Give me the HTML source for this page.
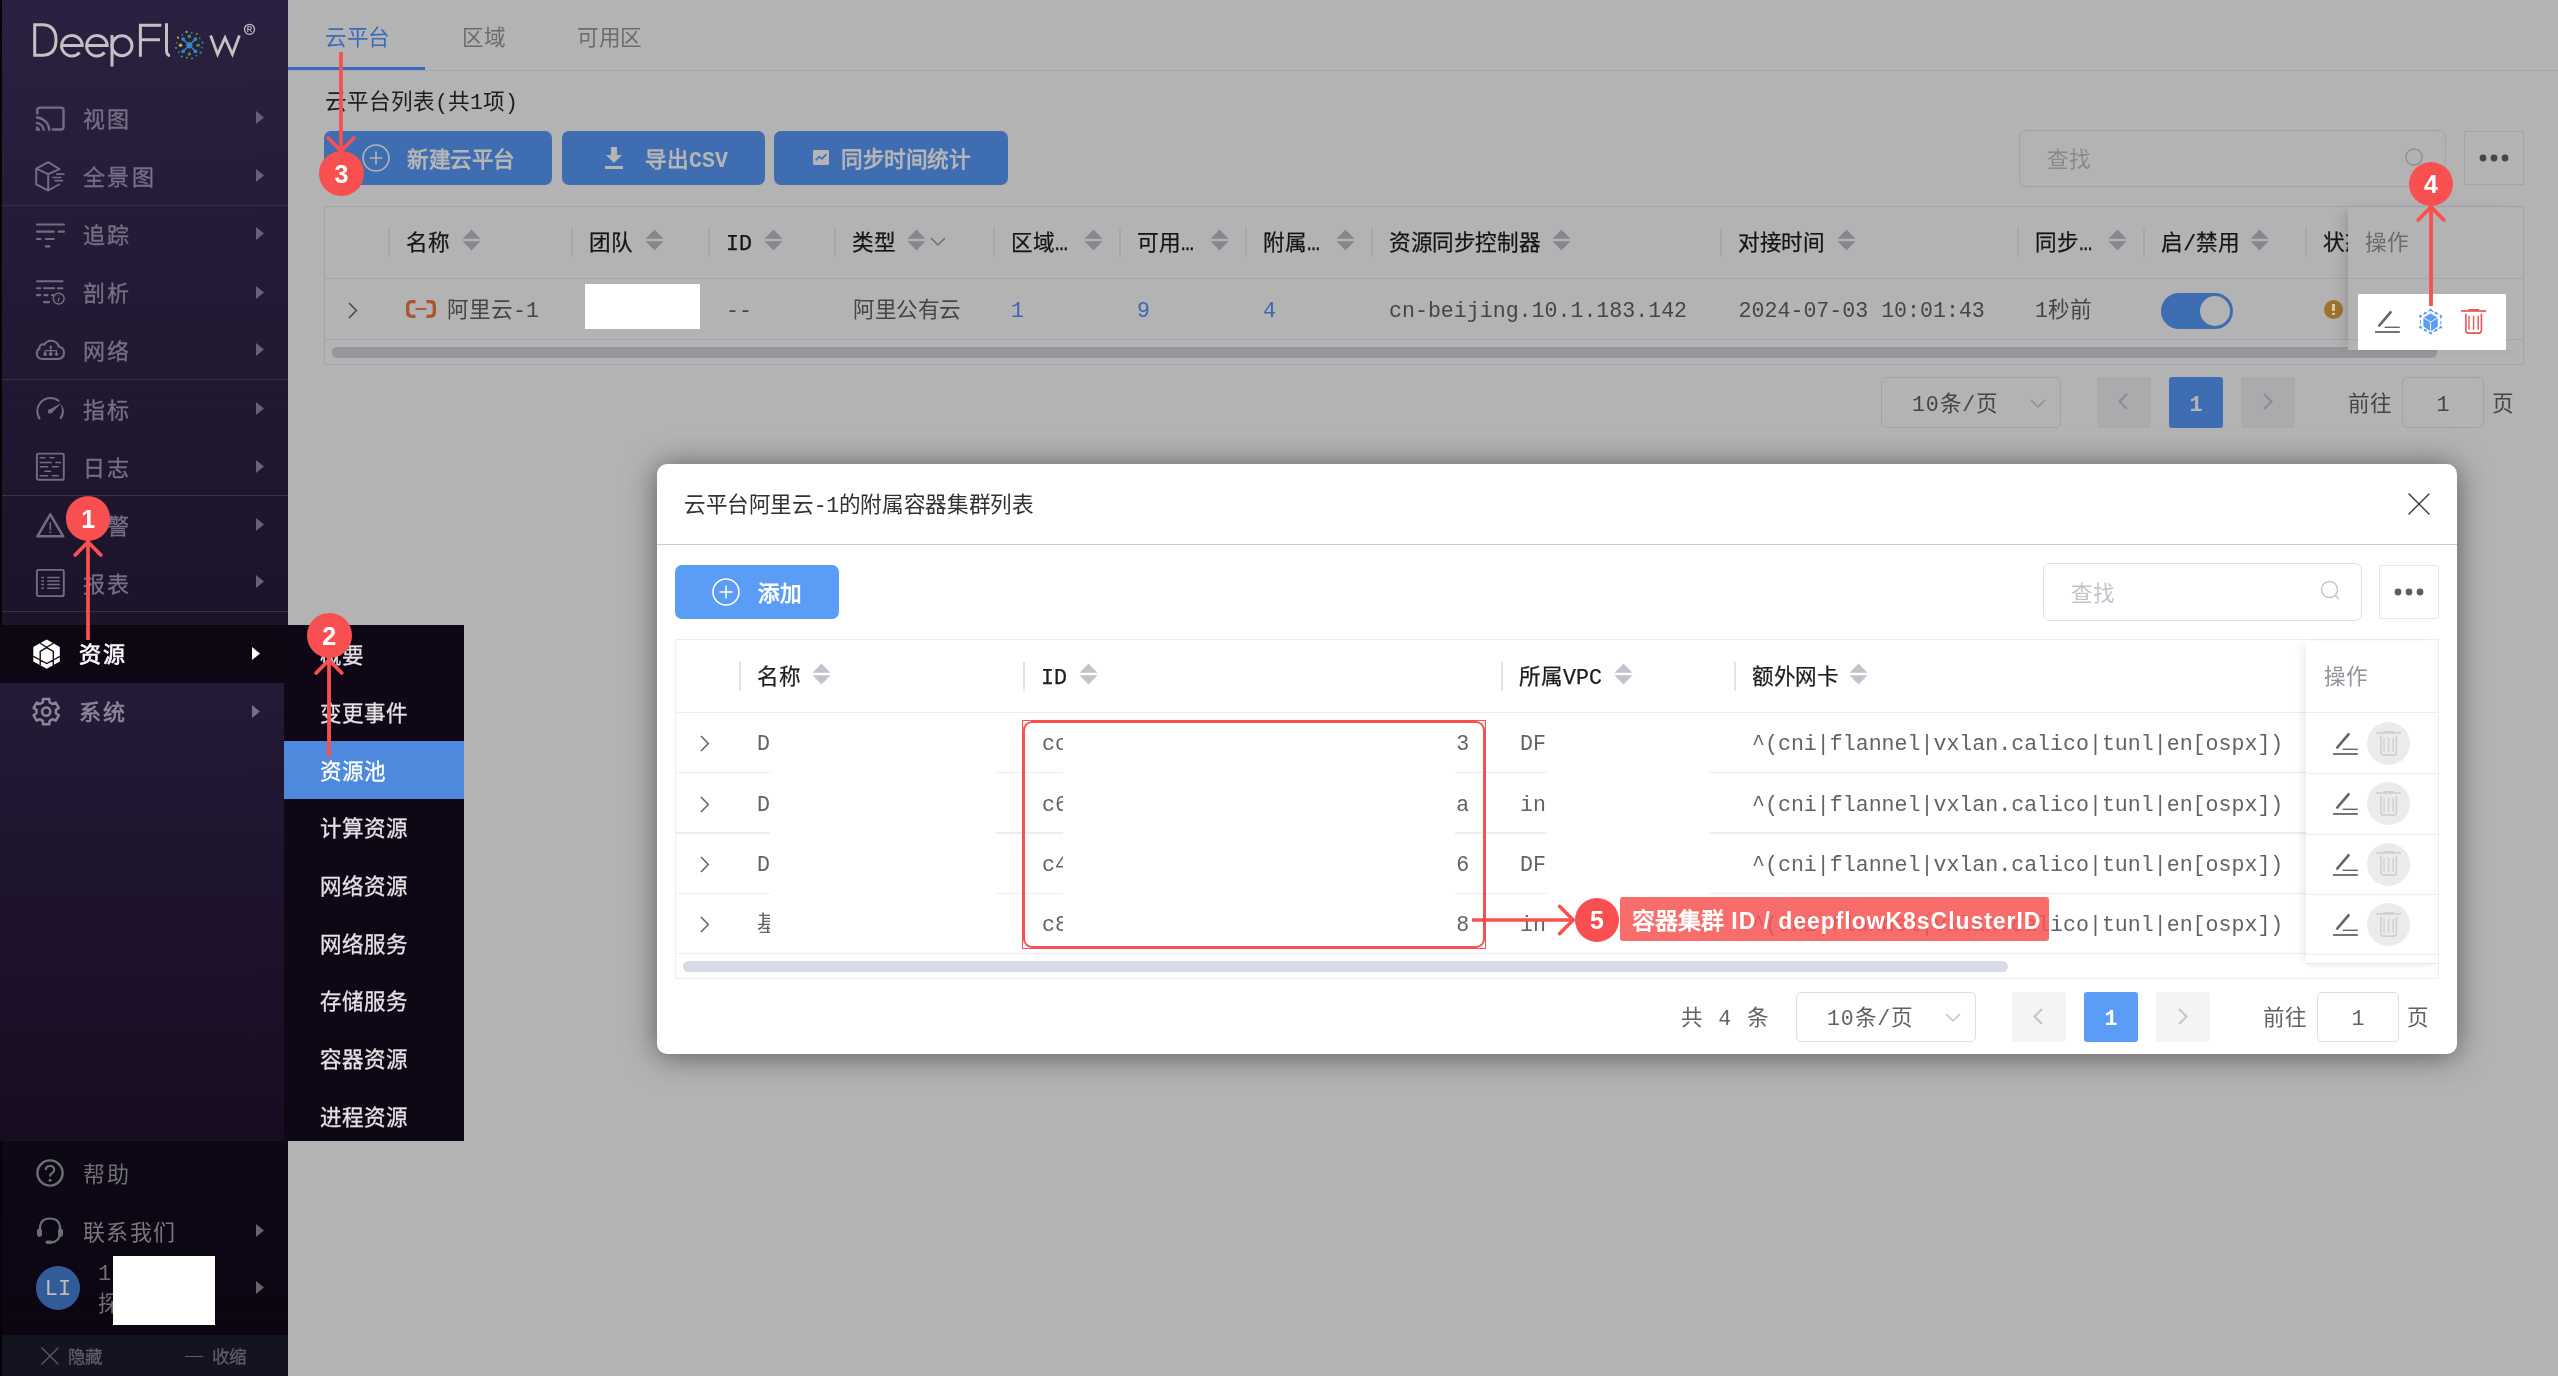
<!DOCTYPE html>
<html lang="zh-CN"><head><meta charset="utf-8"><title>DeepFlow</title>
<style>
html,body{margin:0;padding:0;}
body{width:2558px;height:1376px;overflow:hidden;background:#b3b3b3;position:relative;font-family:"Liberation Mono", monospace;}
div{position:absolute;box-sizing:border-box;}
svg{position:absolute;overflow:visible;}
#r{left:0;top:0;width:2558px;height:1376px;will-change:transform;}
.t{white-space:nowrap;font-family:"Liberation Mono", monospace;}
.s{white-space:nowrap;font-family:"Liberation Sans", sans-serif;}
</style></head>
<body>
<div id="r">
<!-- main area -->
<div class="t" style="left:325px;top:24.0px;height:30px;line-height:30px;font-size:21.6px;color:#3a6cbd;letter-spacing:-0.4px;">云平台</div>
<div class="t" style="left:462px;top:24.0px;height:30px;line-height:30px;font-size:21.6px;color:#6a6c70;letter-spacing:-0.4px;">区域</div>
<div class="t" style="left:577px;top:24.0px;height:30px;line-height:30px;font-size:21.6px;color:#6a6c70;letter-spacing:-0.4px;">可用区</div>
<div style="left:288px;top:70.4px;width:2270px;height:1.1px;background:#a4a7ad"></div>
<div style="left:288px;top:66.6px;width:137px;height:3.6px;background:#3a6cbd"></div>
<div class="t" style="left:325px;top:88.0px;height:30px;line-height:30px;font-size:21.6px;color:#1c1c1c;">云平台列表(共1项)</div>
<div style="left:324px;top:131px;width:228px;height:54px;background:#3f6db2;border-radius:7px"></div>
<svg style="left:362px;top:144px" width="28" height="28" viewBox="0 0 28 28"><circle cx="14" cy="14" r="13" fill="none" stroke="#b3b3b4" stroke-width="1.6"/><path d="M14 7.5V20.5M7.5 14H20.5" stroke="#b3b3b4" stroke-width="1.6"/></svg>
<div class="t" style="left:407px;top:145.5px;height:30px;line-height:30px;font-size:21.6px;color:#b5b5b6;letter-spacing:-0.4px;font-weight:bold">新建云平台</div>
<div style="left:562px;top:131px;width:203px;height:54px;background:#3f6db2;border-radius:7px"></div>
<svg style="left:604px;top:147px" width="20" height="22" viewBox="0 0 20 22"><path d="M7 0H13V8H18L10 16L2 8H7Z M1 19H19V22H1Z" fill="#b5b5b6"/></svg>
<div class="t" style="left:645px;top:145.5px;height:30px;line-height:30px;font-size:21.6px;color:#b5b5b6;font-weight:bold">导出CSV</div>
<div style="left:774px;top:131px;width:234px;height:54px;background:#3f6db2;border-radius:7px"></div>
<svg style="left:813px;top:150px" width="16" height="15" viewBox="0 0 18 16" preserveAspectRatio="none"><rect x="0" y="0" width="18" height="16" rx="1.5" fill="#b5b5b6"/><path d="M3 11L7 7L10 9.5L15 4.5" stroke="#3f6db2" stroke-width="1.8" fill="none"/></svg>
<div class="t" style="left:841px;top:145.5px;height:30px;line-height:30px;font-size:21.6px;color:#b5b5b6;letter-spacing:-0.4px;font-weight:bold">同步时间统计</div>
<div style="left:2019px;top:130px;width:427px;height:57px;border:1.4px solid #9fa2a9;border-radius:7px"></div>
<div class="t" style="left:2047px;top:146.0px;height:30px;line-height:30px;font-size:21.6px;color:#87898f;letter-spacing:-0.4px;">查找</div>
<svg style="left:2405px;top:148px" width="20" height="20" viewBox="0 0 20 20"><circle cx="9" cy="9" r="8" fill="none" stroke="#8d8f94" stroke-width="1.4"/></svg>
<div style="left:2464px;top:131px;width:60px;height:54px;border:1.3px solid #a4a6ab;"></div>
<svg style="left:2478px;top:153px" width="32" height="10" viewBox="0 0 32 10"><circle cx="5" cy="5" r="3.4" fill="#454649"/><circle cx="16" cy="5" r="3.4" fill="#454649"/><circle cx="27" cy="5" r="3.4" fill="#454649"/></svg>
<div style="left:324px;top:205.5px;width:2200px;height:159.5px;border:1.3px solid #a1a4ac;"></div>
<div style="left:325px;top:277.8px;width:2198px;height:1.1px;background:#a5a7ad"></div>
<div style="left:325px;top:339.3px;width:2198px;height:1.1px;background:#a5a7ad"></div>
<div style="left:332px;top:347px;width:2105px;height:10.5px;background:#95979d;border-radius:5px"></div>
<div style="left:388.1px;top:227.5px;width:1.7px;height:29px;background:#a6a8ad"></div>
<div class="t" style="left:406px;top:229.0px;height:30px;line-height:30px;font-size:21.6px;color:#151515;letter-spacing:-0.4px;-webkit-text-stroke:0.25px">名称</div>
<svg style="left:462px;top:229.3px" width="19" height="22" viewBox="0 0 19 22"><path d="M9.5 0.5L18.5 9.7H0.5Z M9.5 21.5L18.5 12.3H0.5Z" fill="#85888f"/></svg>
<div style="left:571.1px;top:227.5px;width:1.7px;height:29px;background:#a6a8ad"></div>
<div class="t" style="left:589px;top:229.0px;height:30px;line-height:30px;font-size:21.6px;color:#151515;letter-spacing:-0.4px;-webkit-text-stroke:0.25px">团队</div>
<svg style="left:645px;top:229.3px" width="19" height="22" viewBox="0 0 19 22"><path d="M9.5 0.5L18.5 9.7H0.5Z M9.5 21.5L18.5 12.3H0.5Z" fill="#85888f"/></svg>
<div style="left:708.1px;top:227.5px;width:1.7px;height:29px;background:#a6a8ad"></div>
<div class="t" style="left:726px;top:228.5px;height:30px;line-height:30px;font-size:21.6px;color:#151515;-webkit-text-stroke:0.25px">ID</div>
<svg style="left:764px;top:229.3px" width="19" height="22" viewBox="0 0 19 22"><path d="M9.5 0.5L18.5 9.7H0.5Z M9.5 21.5L18.5 12.3H0.5Z" fill="#85888f"/></svg>
<div style="left:834.1px;top:227.5px;width:1.7px;height:29px;background:#a6a8ad"></div>
<div class="t" style="left:852px;top:229.0px;height:30px;line-height:30px;font-size:21.6px;color:#151515;letter-spacing:-0.4px;-webkit-text-stroke:0.25px">类型</div>
<svg style="left:907px;top:229.3px" width="19" height="22" viewBox="0 0 19 22"><path d="M9.5 0.5L18.5 9.7H0.5Z M9.5 21.5L18.5 12.3H0.5Z" fill="#85888f"/></svg>
<div style="left:993.1px;top:227.5px;width:1.7px;height:29px;background:#a6a8ad"></div>
<div class="t" style="left:1011px;top:229.0px;height:30px;line-height:30px;font-size:21.6px;color:#151515;-webkit-text-stroke:0.25px">区域…</div>
<svg style="left:1084px;top:229.3px" width="19" height="22" viewBox="0 0 19 22"><path d="M9.5 0.5L18.5 9.7H0.5Z M9.5 21.5L18.5 12.3H0.5Z" fill="#85888f"/></svg>
<div style="left:1119.1px;top:227.5px;width:1.7px;height:29px;background:#a6a8ad"></div>
<div class="t" style="left:1137px;top:229.0px;height:30px;line-height:30px;font-size:21.6px;color:#151515;-webkit-text-stroke:0.25px">可用…</div>
<svg style="left:1210px;top:229.3px" width="19" height="22" viewBox="0 0 19 22"><path d="M9.5 0.5L18.5 9.7H0.5Z M9.5 21.5L18.5 12.3H0.5Z" fill="#85888f"/></svg>
<div style="left:1245.1px;top:227.5px;width:1.7px;height:29px;background:#a6a8ad"></div>
<div class="t" style="left:1263px;top:229.0px;height:30px;line-height:30px;font-size:21.6px;color:#151515;-webkit-text-stroke:0.25px">附属…</div>
<svg style="left:1336px;top:229.3px" width="19" height="22" viewBox="0 0 19 22"><path d="M9.5 0.5L18.5 9.7H0.5Z M9.5 21.5L18.5 12.3H0.5Z" fill="#85888f"/></svg>
<div style="left:1371.1px;top:227.5px;width:1.7px;height:29px;background:#a6a8ad"></div>
<div class="t" style="left:1389px;top:229.0px;height:30px;line-height:30px;font-size:21.6px;color:#151515;letter-spacing:-0.4px;-webkit-text-stroke:0.25px">资源同步控制器</div>
<svg style="left:1552px;top:229.3px" width="19" height="22" viewBox="0 0 19 22"><path d="M9.5 0.5L18.5 9.7H0.5Z M9.5 21.5L18.5 12.3H0.5Z" fill="#85888f"/></svg>
<div style="left:1720.1px;top:227.5px;width:1.7px;height:29px;background:#a6a8ad"></div>
<div class="t" style="left:1738px;top:229.0px;height:30px;line-height:30px;font-size:21.6px;color:#151515;letter-spacing:-0.4px;-webkit-text-stroke:0.25px">对接时间</div>
<svg style="left:1837px;top:229.3px" width="19" height="22" viewBox="0 0 19 22"><path d="M9.5 0.5L18.5 9.7H0.5Z M9.5 21.5L18.5 12.3H0.5Z" fill="#85888f"/></svg>
<div style="left:2017.3999999999999px;top:227.5px;width:1.7px;height:29px;background:#a6a8ad"></div>
<div class="t" style="left:2035.3px;top:229.0px;height:30px;line-height:30px;font-size:21.6px;color:#151515;-webkit-text-stroke:0.25px">同步…</div>
<svg style="left:2108.3px;top:229.3px" width="19" height="22" viewBox="0 0 19 22"><path d="M9.5 0.5L18.5 9.7H0.5Z M9.5 21.5L18.5 12.3H0.5Z" fill="#85888f"/></svg>
<div style="left:2143.4px;top:227.5px;width:1.7px;height:29px;background:#a6a8ad"></div>
<div class="t" style="left:2161.3px;top:229.0px;height:30px;line-height:30px;font-size:21.6px;color:#151515;-webkit-text-stroke:0.25px">启/禁用</div>
<svg style="left:2250.3px;top:229.3px" width="19" height="22" viewBox="0 0 19 22"><path d="M9.5 0.5L18.5 9.7H0.5Z M9.5 21.5L18.5 12.3H0.5Z" fill="#85888f"/></svg>
<div style="left:2305.1px;top:227.5px;width:1.7px;height:29px;background:#a6a8ad"></div>
<div class="t" style="left:2323px;top:229.0px;height:30px;line-height:30px;font-size:21.6px;color:#151515;letter-spacing:-0.4px;-webkit-text-stroke:0.25px">状态</div>
<svg style="left:930px;top:237px" width="16" height="10" viewBox="0 0 16 10"><path d="M1 1L8 8L15 1" fill="none" stroke="#6d6f74" stroke-width="1.5"/></svg>
<svg style="left:348.3px;top:301.7px" width="10" height="17" viewBox="0 0 10 17"><path d="M1 1L8.4 8.5L1 16" fill="none" stroke="#434548" stroke-width="1.5"/></svg>
<svg style="left:405.5px;top:300px" width="30" height="18" viewBox="0 0 30 18"><path d="M9.5 1.7H6Q1.7 1.7 1.7 5.5V12.5Q1.7 16.3 6 16.3H9.5M20.5 1.7H24Q28.3 1.7 28.3 5.5V12.5Q28.3 16.3 24 16.3H20.5" fill="none" stroke="#a9572a" stroke-width="3.3"/><path d="M9.5 9H20.5" stroke="#a9572a" stroke-width="1.8"/></svg>
<div class="t" style="left:447px;top:296.0px;height:30px;line-height:30px;font-size:21.6px;color:#434548;">阿里云-1</div>
<div style="left:585px;top:284px;width:115px;height:45px;background:#fff"></div>
<div class="t" style="left:726px;top:295.5px;height:30px;line-height:30px;font-size:21.6px;color:#434548;">--</div>
<div class="t" style="left:853px;top:296.0px;height:30px;line-height:30px;font-size:21.6px;color:#434548;letter-spacing:-0.4px;">阿里公有云</div>
<div class="t" style="left:1011px;top:295.5px;height:30px;line-height:30px;font-size:21.6px;color:#3a67b3;">1</div>
<div class="t" style="left:1137px;top:295.5px;height:30px;line-height:30px;font-size:21.6px;color:#3a67b3;">9</div>
<div class="t" style="left:1263px;top:295.5px;height:30px;line-height:30px;font-size:21.6px;color:#3a67b3;">4</div>
<div class="t" style="left:1389px;top:295.5px;height:30px;line-height:30px;font-size:21.6px;color:#434548;">cn-beijing.10.1.183.142</div>
<div class="t" style="left:1738.6px;top:295.5px;height:30px;line-height:30px;font-size:21.6px;color:#434548;">2024-07-03 10:01:43</div>
<div class="t" style="left:2035px;top:296.0px;height:30px;line-height:30px;font-size:21.6px;color:#434548;">1秒前</div>
<div style="left:2161px;top:293px;width:72px;height:36px;background:#3f6db2;border-radius:18px"></div>
<div style="left:2200px;top:296px;width:30px;height:30px;background:#b3b3b3;border-radius:15px"></div>
<div style="left:2324px;top:299.6px;width:19px;height:19px;background:#9f7230;border-radius:10px"></div>
<div style="left:2332.4px;top:303.6px;width:2.4px;height:7px;background:#d9c9a8"></div>
<div style="left:2332.4px;top:312.6px;width:2.4px;height:2.4px;background:#d9c9a8"></div>
<div style="left:2348px;top:207px;width:175px;height:143px;background:#b3b3b3;box-shadow:-9px 0 12px -5px rgba(0,0,0,0.15)"></div>
<div style="left:2348px;top:277.8px;width:175px;height:1.1px;background:#a5a7ad"></div>
<div style="left:2348px;top:339.3px;width:175px;height:1.1px;background:#a5a7ad"></div>
<div class="t" style="left:2365px;top:229.0px;height:30px;line-height:30px;font-size:21.6px;color:#6a6c70;letter-spacing:-0.4px;">操作</div>
<div style="left:1881px;top:377px;width:180px;height:51px;border:1.4px solid #9fa2a9;border-radius:5px"></div>
<div class="t" style="left:1912px;top:390.0px;height:30px;line-height:30px;font-size:21.6px;color:#434548;letter-spacing:0.8px">10条/页</div>
<svg style="left:2030px;top:399px" width="16" height="10" viewBox="0 0 16 10"><path d="M1 1L8 8L15 1" fill="none" stroke="#8d8f94" stroke-width="1.5"/></svg>
<div style="left:2097px;top:377px;width:54px;height:51px;background:#ababad;border-radius:3px"></div>
<svg style="left:2118px;top:393px" width="10" height="17" viewBox="0 0 10 17"><path d="M9 1L1.5 8.5L9 16" fill="none" stroke="#898b90" stroke-width="2"/></svg>
<div style="left:2169px;top:377px;width:54px;height:51px;background:#3f6db2;border-radius:3px"></div>
<div class="t" style="left:2169px;top:389.5px;height:30px;line-height:30px;font-size:21.6px;color:#b5b5b6;width:54px;font-weight:bold;text-align:center">1</div>
<div style="left:2241px;top:377px;width:54px;height:51px;background:#ababad;border-radius:3px"></div>
<svg style="left:2263px;top:393px" width="10" height="17" viewBox="0 0 10 17"><path d="M1 1L8.5 8.5L1 16" fill="none" stroke="#898b90" stroke-width="2"/></svg>
<div class="t" style="left:2348px;top:390.0px;height:30px;line-height:30px;font-size:21.6px;color:#434548;letter-spacing:-0.4px;">前往</div>
<div style="left:2402px;top:377px;width:82px;height:51px;border:1.4px solid #9fa2a9;border-radius:5px"></div>
<div class="t" style="left:2402px;top:389.5px;height:30px;line-height:30px;font-size:21.6px;color:#434548;width:82px;text-align:center">1</div>
<div class="t" style="left:2492px;top:390.0px;height:30px;line-height:30px;font-size:21.6px;color:#434548;letter-spacing:-0.4px;">页</div>
<div style="left:2358px;top:294px;width:148px;height:56px;background:#fff"></div>
<svg style="left:2374px;top:308px" width="27" height="26" viewBox="0 0 27 26" fill="none" stroke="#666"><path d="M5.3 17.5L16.5 4.3" stroke-width="2.7" stroke-linecap="round"/><path d="M10.6 19.3H25.8" stroke-width="1.4"/><path d="M1 24H25.8" stroke-width="1.8"/></svg>
<svg style="left:2418px;top:307px" width="26" height="29" viewBox="0 0 26 29"><path d="M12.6 6.6L19.8 10.7V19.6L12.6 24.4L5.4 19.6V10.7Z" fill="#5b9cf6"/><path d="M12.6 15L19.8 10.7M12.6 15L5.4 10.7M12.6 15V24.4" stroke="#fff" stroke-width="0.9"/><path d="M12.6 3L22.8 8.9V20.3L12.6 26.2L2.4 20.3V8.9Z" fill="none" stroke="#5b9cf6" stroke-width="1.1" stroke-dasharray="3.4 2.2"/><circle cx="12.6" cy="3" r="1.25" fill="#5b9cf6"/><circle cx="22.8" cy="8.9" r="1.25" fill="#5b9cf6"/><circle cx="22.8" cy="20.3" r="1.25" fill="#5b9cf6"/><circle cx="12.6" cy="26.2" r="1.25" fill="#5b9cf6"/><circle cx="2.4" cy="20.3" r="1.25" fill="#5b9cf6"/><circle cx="2.4" cy="8.9" r="1.25" fill="#5b9cf6"/><circle cx="17.9" cy="6" r="1.25" fill="#5b9cf6"/><circle cx="7.3" cy="6" r="1.25" fill="#5b9cf6"/><circle cx="17.9" cy="23.3" r="1.25" fill="#5b9cf6"/><circle cx="7.3" cy="23.3" r="1.25" fill="#5b9cf6"/></svg>
<svg style="left:2460px;top:308px" width="27" height="27" viewBox="0 0 27 27" fill="none" stroke="#e85656"><path d="M1 3H26" stroke-width="1.7"/><path d="M9 1.9H18.5" stroke-width="1.8" stroke-linecap="round"/><path d="M5.9 5.8V22.5Q5.9 25.1 8.5 25.1H18.8Q21.4 25.1 21.4 22.5V5.8" stroke-width="1.6"/><path d="M9 7.8V21.8M13.6 7.8V21.8M18.2 7.8V21.8" stroke-width="1.4"/></svg>
<!-- sidebar -->
<div style="left:0px;top:0px;width:2px;height:1376px;background:#050308"></div>
<div style="left:2px;top:0px;width:286px;height:1140px;background:linear-gradient(180deg,rgb(41,33,63) 0%,rgb(16,8,22) 100%)"></div>
<div style="left:2px;top:1140px;width:286px;height:195px;background:linear-gradient(180deg,#0e0716,#0c0613)"></div>
<div style="left:2px;top:1335px;width:286px;height:41px;background:#141320"></div>
<svg style="left:0;top:0" width="288" height="80" viewBox="0 0 288 80" fill="none" stroke="#c2c2c4" stroke-width="3">
<path d="M34.7 24.7V55.2H42Q56 55.2 56 40Q56 24.7 42 24.7Z"/>
<path d="M61.8 45.6H82.2A10.3 10.3 0 1 0 79.6 52.6"/>
<path d="M86.8 45.6H107.2A10.3 10.3 0 1 0 104.6 52.6"/>
<path d="M112 35V66.5"/><circle cx="122" cy="45.7" r="10"/>
<path d="M140.4 56.7V25.2H161.3M140.4 39.8H160"/>
<path d="M166.5 23.3V50Q166.5 55.4 170 55.4"/>
<path d="M210.6 35.6L217.6 54.2L225 37.6L232.4 54.2L239.4 35.6" stroke-linejoin="miter" stroke-width="2.8"/>
<circle cx="249.5" cy="29.3" r="5" stroke-width="1.3"/>
<path d="M247.8 32V26.6H249.8Q251.4 26.6 251.4 28Q251.4 29.4 249.8 29.4H247.8M249.8 29.4L251.6 32" stroke-width="1"/>
</svg>
<svg style="left:0;top:0" width="288" height="80" viewBox="0 0 288 80"><path d="M183.3 39.2L195.3 51.2M195.3 39.2L183.3 51.2" stroke="#3787bd" stroke-width="1.5"/><rect x="186.70000000000002" y="42.6" width="5.2" height="5.2" fill="#3787bd" transform="rotate(45 189.3 45.2)"/><circle cx="195.4" cy="51.3" r="1.9" fill="#3787bd"/><circle cx="183.2" cy="51.3" r="1.9" fill="#3787bd"/><circle cx="183.2" cy="39.1" r="1.9" fill="#3787bd"/><circle cx="195.4" cy="39.1" r="1.9" fill="#3787bd"/><circle cx="198.1" cy="45.2" r="1.8" fill="#479237"/><circle cx="189.3" cy="54.0" r="1.8" fill="#479237"/><circle cx="180.5" cy="45.2" r="1.8" fill="#bfab38"/><circle cx="189.3" cy="36.4" r="1.8" fill="#479237"/><circle cx="201.7" cy="47.6" r="0.85" fill="#3787bd"/><circle cx="200.6" cy="52.7" r="1.1" fill="#479237"/><circle cx="196.3" cy="55.6" r="0.85" fill="#3787bd"/><circle cx="192.0" cy="58.5" r="1.1" fill="#3787bd"/><circle cx="186.9" cy="57.6" r="0.85" fill="#bfab38"/><circle cx="181.8" cy="56.5" r="1.1" fill="#3787bd"/><circle cx="178.9" cy="52.2" r="0.85" fill="#3787bd"/><circle cx="176.0" cy="47.9" r="1.1" fill="#3787bd"/><circle cx="176.9" cy="42.8" r="0.85" fill="#479237"/><circle cx="178.0" cy="37.7" r="1.1" fill="#bfab38"/><circle cx="182.3" cy="34.8" r="0.85" fill="#3787bd"/><circle cx="186.6" cy="31.9" r="1.1" fill="#bfab38"/><circle cx="191.7" cy="32.8" r="0.85" fill="#3787bd"/><circle cx="196.8" cy="33.9" r="1.1" fill="#479237"/><circle cx="199.7" cy="38.2" r="0.85" fill="#3787bd"/><circle cx="202.6" cy="42.5" r="1.1" fill="#3787bd"/></svg>
<svg style="left:33px;top:101px" width="36" height="34" viewBox="-3 -17 36 34" fill="none" stroke="#736c84" stroke-width="1.8"><path d="M1.3 -3.6V-7.9Q1.3 -10.4 3.8 -10.4H25Q27.5 -10.4 27.5 -7.9V9Q27.5 11.5 25 11.5H15.8" stroke-width="2.4"/><path d="M0 -0.5A13.3 13.3 0 0 1 13.3 12.8M0 4.9A7.9 7.9 0 0 1 7.9 12.8" stroke-width="2.3"/><path d="M0 8.5A4.3 4.3 0 0 1 4.3 12.8H0Z" fill="#736c84" stroke="none"/></svg>
<div class="s" style="left:83px;top:104.0px;height:31px;line-height:31px;font-size:22px;color:#766f86;letter-spacing:2.4px;-webkit-text-stroke:0.3px">视图</div>
<svg style="left:256px;top:111.4px" width="8" height="13" viewBox="0 0 8 13"><path d="M0 0L8 6.5L0 13Z" fill="#686179"/></svg>
<svg style="left:33px;top:159px" width="36" height="34" viewBox="-3 -17 36 34" fill="none" stroke="#736c84" stroke-width="1.8"><path d="M12.2 -13.8L23.5 -6.9L12.2 -1.8L0.2 -7.3ZM0.2 -7.3V8.4L12.2 14.5L23.8 8M12.2 -1.8V14.5" stroke-width="2" stroke-linejoin="round"/><path d="M20.2 -1.8H28.5M16.2 1.5H25.3M18.4 4.7H27.1" stroke-width="1.7"/></svg>
<div class="s" style="left:83px;top:162.0px;height:31px;line-height:31px;font-size:22px;color:#766f86;letter-spacing:2.4px;-webkit-text-stroke:0.3px">全景图</div>
<svg style="left:256px;top:169.3px" width="8" height="13" viewBox="0 0 8 13"><path d="M0 0L8 6.5L0 13Z" fill="#686179"/></svg>
<svg style="left:33px;top:217px" width="36" height="34" viewBox="-3 -17 36 34" fill="none" stroke="#736c84" stroke-width="1.8"><path d="M1 -9.5H27.9M1 -2.3H17.7M22.6 -2.3H27.9M1 5H4.5M9.9 5H17.7M9.9 12.4H13.4" stroke-width="2.2" stroke-linecap="round"/></svg>
<div class="s" style="left:83px;top:220.0px;height:31px;line-height:31px;font-size:22px;color:#766f86;letter-spacing:2.4px;-webkit-text-stroke:0.3px">追踪</div>
<svg style="left:256px;top:227.4px" width="8" height="13" viewBox="0 0 8 13"><path d="M0 0L8 6.5L0 13Z" fill="#686179"/></svg>
<svg style="left:33px;top:275px" width="36" height="34" viewBox="-3 -17 36 34" fill="none" stroke="#736c84" stroke-width="1.8"><path d="M1 -10.7H26.5M1 -3.7H4.3M8.2 -3.7H18.1M21.9 -3.7H26.5M1 3.1H4.3M8.5 3.1H11.5M16 3.1H17M8.1 10.1H13" stroke-width="2.1" stroke-linecap="round"/><circle cx="22.7" cy="6.6" r="5.4" stroke-width="1.4"/><path d="M23.3 3.4L23.1 4.2M23 5.6L22.2 9.6" stroke-width="1.2"/></svg>
<div class="s" style="left:83px;top:278.0px;height:31px;line-height:31px;font-size:22px;color:#766f86;letter-spacing:2.4px;-webkit-text-stroke:0.3px">剖析</div>
<svg style="left:256px;top:285.8px" width="8" height="13" viewBox="0 0 8 13"><path d="M0 0L8 6.5L0 13Z" fill="#686179"/></svg>
<svg style="left:33px;top:333px" width="36" height="34" viewBox="-3 -17 36 34" fill="none" stroke="#736c84" stroke-width="1.8"><path d="M6.5 9H21.5Q28 8.6 28 2.4Q27.6 -2.6 23 -3.2Q21 -9.2 14.8 -9.2Q10.6 -9.2 8.2 -5.2Q5.8 -6.6 4 -4.2Q3.2 -3.2 3.6 -1.6Q0.6 0.4 0.8 4Q1.2 8.6 6.5 9Z" stroke-width="2.1" stroke-linejoin="round"/><path d="M14.7 -3V3.6M9.1 3.6V0.6H20.5V3.6" stroke-width="1.1"/><path d="M14.7 -5L12.9 -2.2H16.5ZM7.5 2.4H10.7V5.8H7.5ZM20.5 1.9L22.6 4.1L20.5 6.3L18.4 4.1Z" fill="#736c84" stroke="none"/><circle cx="14.7" cy="4.1" r="1.9" fill="#736c84" stroke="none"/></svg>
<div class="s" style="left:83px;top:336.0px;height:31px;line-height:31px;font-size:22px;color:#766f86;letter-spacing:2.4px;-webkit-text-stroke:0.3px">网络</div>
<svg style="left:256px;top:342.7px" width="8" height="13" viewBox="0 0 8 13"><path d="M0 0L8 6.5L0 13Z" fill="#686179"/></svg>
<svg style="left:33px;top:392px" width="36" height="34" viewBox="-3 -17 36 34" fill="none" stroke="#736c84" stroke-width="1.8"><path d="M3.9 10.1A13.2 13.2 0 0 1 23.3 -7.6" stroke-width="1.9"/><path d="M25.6 -4.4Q30.6 3.2 25.1 10.3L23.4 9.3Q27.2 3 25.2 -3.8Z" fill="#736c84" stroke="none"/><path d="M25.7 -6.3L15.6 3.9L12.7 0.9Z" fill="#736c84" stroke="none"/><circle cx="14" cy="2.4" r="2.2" fill="#736c84" stroke="none"/></svg>
<div class="s" style="left:83px;top:395.0px;height:31px;line-height:31px;font-size:22px;color:#766f86;letter-spacing:2.4px;-webkit-text-stroke:0.3px">指标</div>
<svg style="left:256px;top:401.8px" width="8" height="13" viewBox="0 0 8 13"><path d="M0 0L8 6.5L0 13Z" fill="#686179"/></svg>
<svg style="left:33px;top:449.5px" width="36" height="34" viewBox="-3 -17 36 34" fill="none" stroke="#736c84" stroke-width="1.8"><rect x="0.9" y="-13.4" width="26.9" height="26.2" rx="1.6" stroke-width="1.9"/><path d="M4.2 -9.3H8.8M14.1 -9.3H18.1M4.2 -4.6H15.2M19.9 -4.6H24.5M4.2 -0.2H11.7M16.4 -0.2H22.2M8.8 4.3H14.6M4.2 8.7H11.7M16.4 8.7H22.2" stroke-width="1.5" stroke-linecap="round"/></svg>
<div class="s" style="left:83px;top:452.5px;height:31px;line-height:31px;font-size:22px;color:#766f86;letter-spacing:2.4px;-webkit-text-stroke:0.3px">日志</div>
<svg style="left:256px;top:459.5px" width="8" height="13" viewBox="0 0 8 13"><path d="M0 0L8 6.5L0 13Z" fill="#686179"/></svg>
<svg style="left:33px;top:508px" width="36" height="34" viewBox="-3 -17 36 34" fill="none" stroke="#736c84" stroke-width="1.8"><path d="M14.3 -10.6L27.2 11.3H1.4Z" stroke-width="2.5" stroke-linejoin="round"/><path d="M14.3 -2.7V5" stroke-width="1.5"/><circle cx="14.3" cy="7.2" r="1" fill="#736c84" stroke="none"/></svg>
<div class="s" style="left:83px;top:511.0px;height:31px;line-height:31px;font-size:22px;color:#766f86;letter-spacing:2.4px;-webkit-text-stroke:0.3px">告警</div>
<svg style="left:256px;top:517.7px" width="8" height="13" viewBox="0 0 8 13"><path d="M0 0L8 6.5L0 13Z" fill="#686179"/></svg>
<svg style="left:33px;top:565.5px" width="36" height="34" viewBox="-3 -17 36 34" fill="none" stroke="#736c84" stroke-width="1.8"><rect x="0.9" y="-13.1" width="26.9" height="26.2" rx="1.6" stroke-width="1.9"/><path d="M5.3 -5.5H8M11.2 -5.5H23.7M5.3 -2H8M11.2 -2H23.7M5.3 1.5H8M11.2 1.5H23.7M5.3 5.2H8M11.2 5.2H23.7" stroke-width="1.6"/></svg>
<div class="s" style="left:83px;top:568.5px;height:31px;line-height:31px;font-size:22px;color:#766f86;letter-spacing:2.4px;-webkit-text-stroke:0.3px">报表</div>
<svg style="left:256px;top:575.1px" width="8" height="13" viewBox="0 0 8 13"><path d="M0 0L8 6.5L0 13Z" fill="#686179"/></svg>
<div style="left:2px;top:204.8px;width:286px;height:1.2px;background:#373143"></div>
<div style="left:2px;top:379.3px;width:286px;height:1.2px;background:#373143"></div>
<div style="left:2px;top:494.8px;width:286px;height:1.2px;background:#373143"></div>
<div style="left:2px;top:610.8px;width:286px;height:1.2px;background:#373143"></div>
<svg style="left:33px;top:1156px" width="36" height="34" viewBox="-3 -17 36 34" fill="none" stroke="#6b7074" stroke-width="1.8"><circle cx="14" cy="0" r="12.6" stroke-width="2.4"/><path d="M9.8 -3Q9.8 -7 14 -7Q18.2 -7 18.2 -3.2Q18.2 -1 16 0.2Q14 1.3 14 3.5" stroke-width="2.2"/><circle cx="14" cy="7.2" r="1.5" fill="#6b7074" stroke="none"/></svg>
<div class="s" style="left:83px;top:1159.0px;height:31px;line-height:31px;font-size:22px;color:#6f7073;letter-spacing:2px">帮助</div>
<svg style="left:33px;top:1213px" width="36" height="34" viewBox="-3 -17 36 34" fill="none" stroke="#6b7074" stroke-width="1.8"><path d="M4 2V-1.5Q4 -11.5 14 -11.5Q24 -11.5 24 -1.5V3Q24 11.5 15 12.5" stroke-width="2.2"/><rect x="1" y="-1.5" width="5" height="8.5" rx="2.4" fill="#6b7074" stroke="none"/><rect x="22" y="-1.5" width="5" height="8.5" rx="2.4" fill="#6b7074" stroke="none"/><rect x="9.5" y="10.5" width="7" height="3.6" rx="1.8" fill="#6b7074" stroke="none"/></svg>
<div class="s" style="left:83px;top:1216.5px;height:31px;line-height:31px;font-size:22px;color:#77787b;letter-spacing:1.4px">联系我们</div>
<svg style="left:256px;top:1223.5px" width="8" height="13" viewBox="0 0 8 13"><path d="M0 0L8 6.5L0 13Z" fill="#64666b"/></svg>
<div style="left:36px;top:1265.8px;width:44px;height:44px;background:#325c99;border-radius:22px"></div>
<div class="t" style="left:36px;top:1274.03px;height:31px;line-height:31px;font-size:22px;color:#c1bdb5;width:44px;text-align:center">LI</div>
<div class="t" style="left:98px;top:1258.63px;height:31px;line-height:31px;font-size:22px;color:#6f7073;">1</div>
<div class="s" style="left:98px;top:1287.5px;height:31px;line-height:31px;font-size:22px;color:#6f7073;">探</div>
<div style="left:113px;top:1256px;width:102px;height:69px;background:#fff"></div>
<svg style="left:256px;top:1280.5px" width="8" height="13" viewBox="0 0 8 13"><path d="M0 0L8 6.5L0 13Z" fill="#64666b"/></svg>
<svg style="left:41px;top:1347px" width="18" height="18" viewBox="0 0 18 18"><path d="M0.5 0.5L17.5 17.5M17.5 0.5L0.5 17.5" stroke="#5b5c66" stroke-width="1.2"/></svg>
<div class="s" style="left:68px;top:1345.0px;height:24px;line-height:24px;font-size:17.5px;color:#5d5e68;-webkit-text-stroke:0.3px">隐藏</div>
<div style="left:185px;top:1355.5px;width:18px;height:1.4px;background:#5b5c66"></div>
<div class="s" style="left:212px;top:1345.0px;height:24px;line-height:24px;font-size:17.5px;color:#5d5e68;-webkit-text-stroke:0.3px">收缩</div>
<!-- popup -->
<div style="left:0px;top:625px;width:284px;height:515.6px;background:linear-gradient(180deg,rgb(39,28,59) 0%,rgb(37,26,55) 11%,rgb(23,12,32) 100%)"></div>
<div style="left:0px;top:625px;width:284px;height:58px;background:#0f0614"></div>
<div style="left:284px;top:625px;width:180px;height:515.6px;background:#0f0715"></div>
<svg style="left:29px;top:637px" width="36" height="34" viewBox="-3 -17 36 34" fill="none" stroke="#ffffff" stroke-width="1.8"><path d="M14.7 -14.4L27.8 -7.1V7.5L14.7 14.7L1.3 7.5V-7.1Z" fill="#ffffff" stroke="none"/><path d="M8.2 -10.8L14.7 -6.7L21.3 -10.8M14.7 -6.4L21.3 -2.7V6L14.7 9.6L8.2 6V-2.7ZM8.2 6V11.4M21.3 6V11.4M1.3 2.4L8.2 6M27.8 2.4L21.3 6" stroke="#0f0614" stroke-width="1.35"/></svg>
<div class="s" style="left:79px;top:639.0px;height:31px;line-height:31px;font-size:22px;color:#fbfbfb;letter-spacing:2.4px;-webkit-text-stroke:0.65px">资源</div>
<svg style="left:252px;top:646.5px" width="8" height="13" viewBox="0 0 8 13"><path d="M0 0L8 6.5L0 13Z" fill="#ffffff"/></svg>
<svg style="left:29px;top:695px" width="36" height="34" viewBox="-3 -17 36 34" fill="none" stroke="#8b8598" stroke-width="1.8"><path d="M10.8 -9.7L11.1 -13.1L17.3 -13.1L17.6 -9.7L20.6 -8.0L23.7 -9.4L26.8 -4.1L23.9 -2.1L23.9 1.3L26.8 3.3L23.7 8.6L20.6 7.2L17.6 8.9L17.3 12.3L11.1 12.3L10.8 8.9L7.8 7.2L4.7 8.6L1.6 3.3L4.5 1.3L4.5 -2.1L1.6 -4.1L4.7 -9.4L7.8 -8.0Z" stroke-width="2.5" stroke-linejoin="round"/><circle cx="14.2" cy="-0.4" r="4.1" stroke-width="2.5"/></svg>
<div class="s" style="left:79px;top:697.0px;height:31px;line-height:31px;font-size:22px;color:#8b8598;letter-spacing:2.4px;-webkit-text-stroke:0.65px">系统</div>
<svg style="left:252px;top:704.5px" width="8" height="13" viewBox="0 0 8 13"><path d="M0 0L8 6.5L0 13Z" fill="#756e86"/></svg>
<div style="left:284px;top:741px;width:180px;height:58px;background:#4d89dc"></div>
<div class="s" style="left:320px;top:641.2px;height:30px;line-height:30px;font-size:21.5px;color:#e4e2e6;letter-spacing:0.1px;-webkit-text-stroke:0.3px">概要</div>
<div class="s" style="left:320px;top:698.9px;height:30px;line-height:30px;font-size:21.5px;color:#e4e2e6;letter-spacing:0.1px;-webkit-text-stroke:0.3px">变更事件</div>
<div class="s" style="left:320px;top:756.6px;height:30px;line-height:30px;font-size:21.5px;color:#ffffff;letter-spacing:0.1px;-webkit-text-stroke:0.3px">资源池</div>
<div class="s" style="left:320px;top:814.3px;height:30px;line-height:30px;font-size:21.5px;color:#e4e2e6;letter-spacing:0.1px;-webkit-text-stroke:0.3px">计算资源</div>
<div class="s" style="left:320px;top:872.0px;height:30px;line-height:30px;font-size:21.5px;color:#e4e2e6;letter-spacing:0.1px;-webkit-text-stroke:0.3px">网络资源</div>
<div class="s" style="left:320px;top:929.7px;height:30px;line-height:30px;font-size:21.5px;color:#e4e2e6;letter-spacing:0.1px;-webkit-text-stroke:0.3px">网络服务</div>
<div class="s" style="left:320px;top:987.4px;height:30px;line-height:30px;font-size:21.5px;color:#e4e2e6;letter-spacing:0.1px;-webkit-text-stroke:0.3px">存储服务</div>
<div class="s" style="left:320px;top:1045.1px;height:30px;line-height:30px;font-size:21.5px;color:#e4e2e6;letter-spacing:0.1px;-webkit-text-stroke:0.3px">容器资源</div>
<div class="s" style="left:320px;top:1102.8px;height:30px;line-height:30px;font-size:21.5px;color:#e4e2e6;letter-spacing:0.1px;-webkit-text-stroke:0.3px">进程资源</div>
<!-- modal -->
<div style="left:657px;top:464px;width:1800px;height:590px;background:#fff;border-radius:10px;box-shadow:0 2px 30px 0px rgba(0,0,0,0.5)"></div>
<div class="t" style="left:684px;top:491.0px;height:30px;line-height:30px;font-size:21.6px;color:#303133;letter-spacing:-0.38px">云平台阿里云-1的附属容器集群列表</div>
<svg style="left:2407.5px;top:493.3px" width="22" height="22" viewBox="0 0 22 22"><path d="M1 1L21 21M21 1L1 21" stroke="#2f3033" stroke-width="1.3" stroke-linecap="round"/></svg>
<div style="left:657px;top:543.6px;width:1800px;height:1.3px;background:#cdced2"></div>
<div style="left:675px;top:565px;width:164px;height:54px;background:#5b9cf6;border-radius:7px"></div>
<svg style="left:712px;top:578px" width="28" height="28" viewBox="0 0 28 28"><circle cx="14" cy="14" r="13" fill="none" stroke="#fff" stroke-width="1.6"/><path d="M14 7.5V20.5M7.5 14H20.5" stroke="#fff" stroke-width="1.6"/></svg>
<div class="t" style="left:758px;top:579.5px;height:30px;line-height:30px;font-size:21.6px;color:#ffffff;letter-spacing:-0.4px;font-weight:bold">添加</div>
<div style="left:2043px;top:563px;width:319px;height:58px;border:1.5px solid #dcdfe6;border-radius:7px"></div>
<div class="t" style="left:2071px;top:580.0px;height:30px;line-height:30px;font-size:21.6px;color:#c0c4cc;letter-spacing:-0.4px;">查找</div>
<svg style="left:2320px;top:580px" width="22" height="22" viewBox="0 0 22 22"><circle cx="9.5" cy="9.5" r="8" fill="none" stroke="#c0c4cc" stroke-width="1.5"/><path d="M15.5 15.5L19 19" stroke="#c0c4cc" stroke-width="1.5"/></svg>
<div style="left:2379px;top:565px;width:60px;height:54px;border:1.5px solid #e4e7ed;"></div>
<svg style="left:2393px;top:587px" width="32" height="10" viewBox="0 0 32 10"><circle cx="5" cy="5" r="3.4" fill="#5c5e63"/><circle cx="16" cy="5" r="3.4" fill="#5c5e63"/><circle cx="27" cy="5" r="3.4" fill="#5c5e63"/></svg>
<div style="left:675px;top:639.3px;width:1764px;height:339.7px;border:1.4px solid #ebeef5;"></div>
<div style="left:676px;top:711.5px;width:1762px;height:1.5px;background:#ebeef5"></div>
<div style="left:676px;top:771.5px;width:1762px;height:1.5px;background:#ebeef5"></div>
<div style="left:676px;top:832px;width:1762px;height:1.5px;background:#ebeef5"></div>
<div style="left:676px;top:892.5px;width:1762px;height:1.5px;background:#ebeef5"></div>
<div style="left:676px;top:952.5px;width:1762px;height:1.5px;background:#ebeef5"></div>
<div style="left:683px;top:960.7px;width:1325px;height:11px;background:#d8dbe3;border-radius:5.5px"></div>
<div style="left:739.1px;top:661.5px;width:1.7px;height:29px;background:#e1e3e9"></div>
<div class="t" style="left:757px;top:663.0px;height:30px;line-height:30px;font-size:21.6px;color:#1d1d1f;letter-spacing:-0.4px;-webkit-text-stroke:0.25px">名称</div>
<svg style="left:812px;top:662.8px" width="19" height="22" viewBox="0 0 19 22"><path d="M9.5 0.5L18.5 9.7H0.5Z M9.5 21.5L18.5 12.3H0.5Z" fill="#c0c4cc"/></svg>
<div style="left:1023.1px;top:661.5px;width:1.7px;height:29px;background:#e1e3e9"></div>
<div class="t" style="left:1041px;top:662.5px;height:30px;line-height:30px;font-size:21.6px;color:#1d1d1f;-webkit-text-stroke:0.25px">ID</div>
<svg style="left:1079px;top:662.8px" width="19" height="22" viewBox="0 0 19 22"><path d="M9.5 0.5L18.5 9.7H0.5Z M9.5 21.5L18.5 12.3H0.5Z" fill="#c0c4cc"/></svg>
<div style="left:1501.1px;top:661.5px;width:1.7px;height:29px;background:#e1e3e9"></div>
<div class="t" style="left:1519px;top:663.0px;height:30px;line-height:30px;font-size:21.6px;color:#1d1d1f;-webkit-text-stroke:0.25px">所属VPC</div>
<svg style="left:1614px;top:662.8px" width="19" height="22" viewBox="0 0 19 22"><path d="M9.5 0.5L18.5 9.7H0.5Z M9.5 21.5L18.5 12.3H0.5Z" fill="#c0c4cc"/></svg>
<div style="left:1734.1px;top:661.5px;width:1.7px;height:29px;background:#e1e3e9"></div>
<div class="t" style="left:1752px;top:663.0px;height:30px;line-height:30px;font-size:21.6px;color:#1d1d1f;letter-spacing:-0.4px;-webkit-text-stroke:0.25px">额外网卡</div>
<svg style="left:1849px;top:662.8px" width="19" height="22" viewBox="0 0 19 22"><path d="M9.5 0.5L18.5 9.7H0.5Z M9.5 21.5L18.5 12.3H0.5Z" fill="#c0c4cc"/></svg>
<svg style="left:699.5px;top:735.4px" width="10" height="17" viewBox="0 0 10 17"><path d="M1 1L8.3 8.5L1 16" fill="none" stroke="#606266" stroke-width="1.5"/></svg>
<div class="t" style="left:757px;top:728.5px;height:30px;line-height:30px;font-size:21.6px;color:#606266;">D</div>
<div class="t" style="left:1042px;top:728.5px;height:30px;line-height:30px;font-size:21.6px;color:#606266;">cc</div>
<div class="t" style="left:1456.3px;top:728.5px;height:30px;line-height:30px;font-size:21.6px;color:#606266;">3</div>
<div class="t" style="left:1520px;top:728.5px;height:30px;line-height:30px;font-size:21.6px;color:#606266;">DF</div>
<div class="t" style="left:1752px;top:728.5px;height:30px;line-height:30px;font-size:21.6px;color:#606266;">^(cni|flannel|vxlan.calico|tunl|en[ospx])</div>
<svg style="left:699.5px;top:796.4px" width="10" height="17" viewBox="0 0 10 17"><path d="M1 1L8.3 8.5L1 16" fill="none" stroke="#606266" stroke-width="1.5"/></svg>
<div class="t" style="left:757px;top:789.5px;height:30px;line-height:30px;font-size:21.6px;color:#606266;">D</div>
<div class="t" style="left:1042px;top:789.5px;height:30px;line-height:30px;font-size:21.6px;color:#606266;">c6</div>
<div class="t" style="left:1456.3px;top:789.5px;height:30px;line-height:30px;font-size:21.6px;color:#606266;">a</div>
<div class="t" style="left:1520px;top:789.5px;height:30px;line-height:30px;font-size:21.6px;color:#606266;">in</div>
<div class="t" style="left:1752px;top:789.5px;height:30px;line-height:30px;font-size:21.6px;color:#606266;">^(cni|flannel|vxlan.calico|tunl|en[ospx])</div>
<svg style="left:699.5px;top:856.4px" width="10" height="17" viewBox="0 0 10 17"><path d="M1 1L8.3 8.5L1 16" fill="none" stroke="#606266" stroke-width="1.5"/></svg>
<div class="t" style="left:757px;top:849.5px;height:30px;line-height:30px;font-size:21.6px;color:#606266;">D</div>
<div class="t" style="left:1042px;top:849.5px;height:30px;line-height:30px;font-size:21.6px;color:#606266;">c4</div>
<div class="t" style="left:1456.3px;top:849.5px;height:30px;line-height:30px;font-size:21.6px;color:#606266;">6</div>
<div class="t" style="left:1520px;top:849.5px;height:30px;line-height:30px;font-size:21.6px;color:#606266;">DF</div>
<div class="t" style="left:1752px;top:849.5px;height:30px;line-height:30px;font-size:21.6px;color:#606266;">^(cni|flannel|vxlan.calico|tunl|en[ospx])</div>
<svg style="left:699.5px;top:916.4px" width="10" height="17" viewBox="0 0 10 17"><path d="M1 1L8.3 8.5L1 16" fill="none" stroke="#606266" stroke-width="1.5"/></svg>
<div class="t" style="left:757px;top:910.0px;height:30px;line-height:30px;font-size:21.6px;color:#606266;letter-spacing:-0.4px;">基</div>
<div class="t" style="left:1042px;top:909.5px;height:30px;line-height:30px;font-size:21.6px;color:#606266;">c8</div>
<div class="t" style="left:1456.3px;top:909.5px;height:30px;line-height:30px;font-size:21.6px;color:#606266;">8</div>
<div class="t" style="left:1520px;top:909.5px;height:30px;line-height:30px;font-size:21.6px;color:#606266;">in</div>
<div class="t" style="left:1752px;top:909.5px;height:30px;line-height:30px;font-size:21.6px;color:#606266;">^(cni|flannel|vxlan.calico|tunl|en[ospx])</div>
<div style="left:770px;top:722px;width:226px;height:222px;background:#fff"></div>
<div style="left:1063px;top:722px;width:392px;height:222px;background:#fff"></div>
<div style="left:1547px;top:722px;width:162px;height:222px;background:#fff"></div>
<div style="left:2306px;top:641px;width:132px;height:322.5px;background:#fff;box-shadow:-6px 0 10px -4px rgba(0,0,0,0.10), 0 5px 6px -4px rgba(0,0,0,0.08)"></div>
<div style="left:2306px;top:712.0px;width:132px;height:1.3px;background:#ebeef5"></div>
<div style="left:2306px;top:772.7px;width:132px;height:1.3px;background:#ebeef5"></div>
<div style="left:2306px;top:833.6px;width:132px;height:1.3px;background:#ebeef5"></div>
<div style="left:2306px;top:893.8px;width:132px;height:1.3px;background:#ebeef5"></div>
<div style="left:2306px;top:953.8px;width:132px;height:1.3px;background:#ebeef5"></div>
<div style="left:2306px;top:962.6px;width:132px;height:1.4px;background:#e3e7f0"></div>
<div class="t" style="left:2324px;top:663.0px;height:30px;line-height:30px;font-size:21.6px;color:#909399;letter-spacing:-0.4px;">操作</div>
<svg style="left:2332px;top:730.2px" width="27" height="26" viewBox="0 0 27 26" fill="none" stroke="#666"><path d="M5.3 17.5L16.5 4.3" stroke-width="2.7" stroke-linecap="round"/><path d="M10.6 19.3H25.8" stroke-width="1.4"/><path d="M1 24H25.8" stroke-width="1.8"/></svg>
<div style="left:2367px;top:722.1px;width:43.2px;height:43.2px;background:#ebebeb;border-radius:22px"></div>
<svg style="left:2375px;top:729.7px" width="27" height="27" viewBox="0 0 27 27" fill="none" stroke="#d0d0d0"><path d="M1 3H26" stroke-width="1.7"/><path d="M9 1.9H18.5" stroke-width="1.8" stroke-linecap="round"/><path d="M5.9 5.8V22.5Q5.9 25.1 8.5 25.1H18.8Q21.4 25.1 21.4 22.5V5.8" stroke-width="1.6"/><path d="M9 7.8V21.8M13.6 7.8V21.8M18.2 7.8V21.8" stroke-width="1.4"/></svg>
<svg style="left:2332px;top:790.0px" width="27" height="26" viewBox="0 0 27 26" fill="none" stroke="#666"><path d="M5.3 17.5L16.5 4.3" stroke-width="2.7" stroke-linecap="round"/><path d="M10.6 19.3H25.8" stroke-width="1.4"/><path d="M1 24H25.8" stroke-width="1.8"/></svg>
<div style="left:2367px;top:781.9px;width:43.2px;height:43.2px;background:#ebebeb;border-radius:22px"></div>
<svg style="left:2375px;top:789.5px" width="27" height="27" viewBox="0 0 27 27" fill="none" stroke="#d0d0d0"><path d="M1 3H26" stroke-width="1.7"/><path d="M9 1.9H18.5" stroke-width="1.8" stroke-linecap="round"/><path d="M5.9 5.8V22.5Q5.9 25.1 8.5 25.1H18.8Q21.4 25.1 21.4 22.5V5.8" stroke-width="1.6"/><path d="M9 7.8V21.8M13.6 7.8V21.8M18.2 7.8V21.8" stroke-width="1.4"/></svg>
<svg style="left:2332px;top:850.9px" width="27" height="26" viewBox="0 0 27 26" fill="none" stroke="#666"><path d="M5.3 17.5L16.5 4.3" stroke-width="2.7" stroke-linecap="round"/><path d="M10.6 19.3H25.8" stroke-width="1.4"/><path d="M1 24H25.8" stroke-width="1.8"/></svg>
<div style="left:2367px;top:842.8px;width:43.2px;height:43.2px;background:#ebebeb;border-radius:22px"></div>
<svg style="left:2375px;top:850.4px" width="27" height="27" viewBox="0 0 27 27" fill="none" stroke="#d0d0d0"><path d="M1 3H26" stroke-width="1.7"/><path d="M9 1.9H18.5" stroke-width="1.8" stroke-linecap="round"/><path d="M5.9 5.8V22.5Q5.9 25.1 8.5 25.1H18.8Q21.4 25.1 21.4 22.5V5.8" stroke-width="1.6"/><path d="M9 7.8V21.8M13.6 7.8V21.8M18.2 7.8V21.8" stroke-width="1.4"/></svg>
<svg style="left:2332px;top:911.0px" width="27" height="26" viewBox="0 0 27 26" fill="none" stroke="#666"><path d="M5.3 17.5L16.5 4.3" stroke-width="2.7" stroke-linecap="round"/><path d="M10.6 19.3H25.8" stroke-width="1.4"/><path d="M1 24H25.8" stroke-width="1.8"/></svg>
<div style="left:2367px;top:902.9px;width:43.2px;height:43.2px;background:#ebebeb;border-radius:22px"></div>
<svg style="left:2375px;top:910.5px" width="27" height="27" viewBox="0 0 27 27" fill="none" stroke="#d0d0d0"><path d="M1 3H26" stroke-width="1.7"/><path d="M9 1.9H18.5" stroke-width="1.8" stroke-linecap="round"/><path d="M5.9 5.8V22.5Q5.9 25.1 8.5 25.1H18.8Q21.4 25.1 21.4 22.5V5.8" stroke-width="1.6"/><path d="M9 7.8V21.8M13.6 7.8V21.8M18.2 7.8V21.8" stroke-width="1.4"/></svg>
<div class="t" style="left:1681px;top:1004.0px;height:30px;line-height:30px;font-size:21.6px;color:#606266;letter-spacing:1.2px">共 4 条</div>
<div style="left:1796px;top:992px;width:180px;height:50px;border:1.5px solid #dcdfe6;border-radius:5px"></div>
<div class="t" style="left:1827px;top:1004.0px;height:30px;line-height:30px;font-size:21.6px;color:#606266;letter-spacing:0.8px">10条/页</div>
<svg style="left:1945px;top:1013px" width="16" height="10" viewBox="0 0 16 10"><path d="M1 1L8 8L15 1" fill="none" stroke="#c0c4cc" stroke-width="1.5"/></svg>
<div style="left:2012px;top:992px;width:54px;height:50px;background:#f4f4f5;border-radius:3px"></div>
<svg style="left:2033px;top:1008px" width="10" height="17" viewBox="0 0 10 17"><path d="M9 1L1.5 8.5L9 16" fill="none" stroke="#c0c4cc" stroke-width="2"/></svg>
<div style="left:2084px;top:992px;width:54px;height:50px;background:#5b9cf6;border-radius:3px"></div>
<div class="t" style="left:2084px;top:1003.5px;height:30px;line-height:30px;font-size:21.6px;color:#fff;width:54px;font-weight:bold;text-align:center">1</div>
<div style="left:2156px;top:992px;width:54px;height:50px;background:#f4f4f5;border-radius:3px"></div>
<svg style="left:2178px;top:1008px" width="10" height="17" viewBox="0 0 10 17"><path d="M1 1L8.5 8.5L1 16" fill="none" stroke="#c0c4cc" stroke-width="2"/></svg>
<div class="t" style="left:2263px;top:1004.0px;height:30px;line-height:30px;font-size:21.6px;color:#606266;letter-spacing:-0.4px;">前往</div>
<div style="left:2317px;top:992px;width:82px;height:50px;border:1.5px solid #dcdfe6;border-radius:5px"></div>
<div class="t" style="left:2317px;top:1003.5px;height:30px;line-height:30px;font-size:21.6px;color:#606266;width:82px;text-align:center">1</div>
<div class="t" style="left:2407px;top:1004.0px;height:30px;line-height:30px;font-size:21.6px;color:#606266;letter-spacing:-0.4px;">页</div>
<!-- annotations -->
<svg style="left:72.2px;top:540px" width="32" height="100" viewBox="-16 0 32 100"><path d="M0 0V100" stroke="#f85050" stroke-width="3.8"/><path d="M-12.8 15L0 2L12.8 15" fill="none" stroke="#f85050" stroke-width="3.8" stroke-linecap="round"/></svg>
<div style="left:65.9px;top:496.09999999999997px;width:44.6px;height:44.6px;background:#f85050;border-radius:22.3px"></div>
<div class="s" style="left:66.2px;top:501.7px;height:35px;line-height:35px;font-size:25px;color:#fff;width:44px;font-weight:bold;text-align:center">1</div>
<svg style="left:313px;top:658px" width="32" height="99" viewBox="-16 0 32 99"><path d="M0 0V99" stroke="#f85050" stroke-width="3.8"/><path d="M-12.8 15L0 2L12.8 15" fill="none" stroke="#f85050" stroke-width="3.8" stroke-linecap="round"/></svg>
<div style="left:307.0px;top:613.2px;width:44.6px;height:44.6px;background:#f85050;border-radius:22.3px"></div>
<div class="s" style="left:307.3px;top:618.8px;height:35px;line-height:35px;font-size:25px;color:#fff;width:44px;font-weight:bold;text-align:center">2</div>
<svg style="left:325.2px;top:51.5px" width="32" height="101.0" viewBox="-16 0 32 101.0"><path d="M0 0V101.0" stroke="#f85050" stroke-width="3.8"/><path d="M-12.8 86.0L0 99.0L12.8 86.0" fill="none" stroke="#f85050" stroke-width="3.8" stroke-linecap="round"/></svg>
<div style="left:319.09999999999997px;top:151.29999999999998px;width:44.6px;height:44.6px;background:#f85050;border-radius:22.3px"></div>
<div class="s" style="left:319.4px;top:156.9px;height:35px;line-height:35px;font-size:25px;color:#fff;width:44px;font-weight:bold;text-align:center">3</div>
<svg style="left:2415px;top:205px" width="32" height="101" viewBox="-16 0 32 101"><path d="M0 0V101" stroke="#f85050" stroke-width="3.8"/><path d="M-12.8 15L0 2L12.8 15" fill="none" stroke="#f85050" stroke-width="3.8" stroke-linecap="round"/></svg>
<div style="left:2408.7px;top:161.7px;width:44.6px;height:44.6px;background:#f85050;border-radius:22.3px"></div>
<div class="s" style="left:2409px;top:167.3px;height:35px;line-height:35px;font-size:25px;color:#fff;width:44px;font-weight:bold;text-align:center">4</div>
<div style="left:1022px;top:720px;width:464px;height:229px;border:1px solid #f85050;"></div>
<div style="left:1023px;top:721px;width:462px;height:227px;border:2.5px solid #f85050;border-radius:9px"></div>
<svg style="left:1472px;top:904px" width="104" height="32" viewBox="0 0 104 32"><path d="M0 16H102" stroke="#f85050" stroke-width="3.4"/><path d="M87.5 2.2L101.3 16L87.5 29.8" fill="none" stroke="#f85050" stroke-width="3.4" stroke-linecap="round"/></svg>
<div style="left:1574.7px;top:897.7px;width:44.6px;height:44.6px;background:#f85050;border-radius:22.3px"></div>
<div class="s" style="left:1575px;top:903.3px;height:35px;line-height:35px;font-size:25px;color:#fff;width:44px;font-weight:bold;text-align:center">5</div>
<div style="left:1620px;top:897px;width:429px;height:44.4px;background:rgba(248,84,84,0.86);border-radius:3px"></div>
<div class="s" style="left:1632px;top:905.2px;height:32px;line-height:32px;font-size:23px;color:#fff;font-weight:bold">容器集群<span style="letter-spacing:0.95px"> ID / deepflowK8sClusterID</span></div>
</div>
</body></html>
